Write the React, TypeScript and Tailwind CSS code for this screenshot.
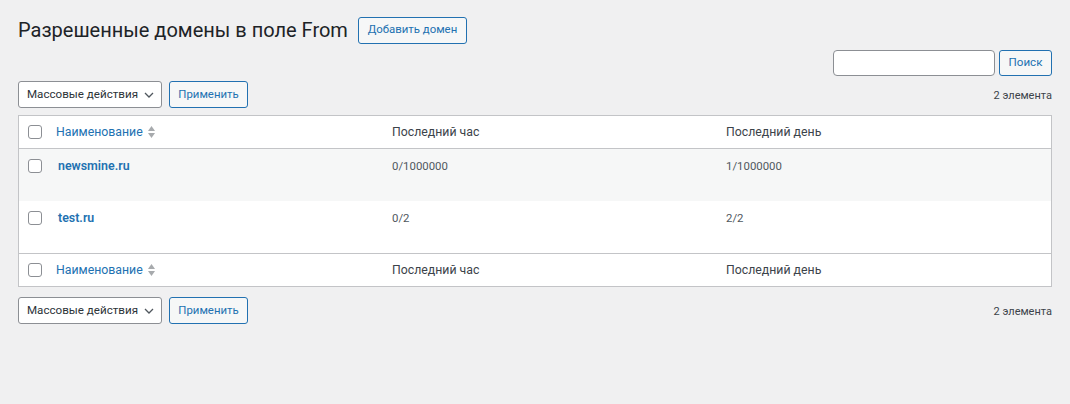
import React from "react";

const font = { fontFamily: 'Roboto, "Liberation Sans", sans-serif' };

function Checkbox() {
  return <span className="block w-[14px] h-[14px] rounded-[3px] border border-[#8c8f94] bg-white" />;
}

function SortArrows() {
  return (
    <svg width="9" height="14" viewBox="0 0 9 14" className="ml-[4px]">
      <path d="M4.5 1 L8 6 L1 6 Z" fill="#a7aaad" />
      <path d="M1 8 L8 8 L4.5 13 Z" fill="#a7aaad" />
    </svg>
  );
}

function BulkActions() {
  return (
    <div className="flex items-center gap-[7px]">
      <div className="flex items-center justify-between w-[144px] h-[27px] pl-[8px] pr-[7px] bg-white border border-[#8c8f94] rounded-[3px] text-[11.6px] text-[#2c3338] whitespace-nowrap">
        <span>Массовые действия</span>
        <svg width="10" height="6" viewBox="0 0 10 6">
          <path d="M1 1 L5 5 L9 1" fill="none" stroke="#50575e" strokeWidth="1.3" />
        </svg>
      </div>
      <button className="h-[27px] w-[79px] bg-[#f6f7f7] border border-[#2271b1] rounded-[3px] text-[11.4px] text-[#2271b1]">
        Применить
      </button>
    </div>
  );
}

function HeadRow({ top }: { top: boolean }) {
  return (
    <div
      className={`grid grid-cols-[27px_336px_334px_1fr] h-[33px] items-center text-[12.3px] text-[#3c434a] ${
        top ? "border-b" : "border-t"
      } border-[#c3c4c7]`}
    >
      <div className="pl-[9px]">
        <Checkbox />
      </div>
      <div className="pl-[10px] flex items-center text-[#2271b1]">
        Наименование
        <SortArrows />
      </div>
      <div className="pl-[10px]">Последний час</div>
      <div className="pl-[10px]">Последний день</div>
    </div>
  );
}

const rows = [
  { name: "newsmine.ru", hour: "0/1000000", day: "1/1000000" },
  { name: "test.ru", hour: "0/2", day: "2/2" },
];

export default function App() {
  return (
    <div className="w-full min-h-screen bg-[#f0f0f1] px-[18px] pt-[15px]" style={font}>
      <div className="flex items-center">
        <h1 className="text-[20px] leading-[30px] text-[#1d2327]">Разрешенные домены в поле From</h1>
        <button className="ml-[10px] h-[27px] w-[109px] bg-[#f6f7f7] border border-[#2271b1] rounded-[3px] text-[11.4px] text-[#2271b1]">
          Добавить домен
        </button>
      </div>

      <div className="flex justify-end gap-[4px] mt-[5px]">
        <input className="w-[162px] h-[26px] bg-white border border-[#8c8f94] rounded-[4px]" />
        <button className="w-[53px] h-[26px] bg-[#f6f7f7] border border-[#2271b1] rounded-[3px] text-[11.6px] text-[#2271b1]">
          Поиск
        </button>
      </div>

      <div className="flex items-center justify-between mt-[5px]">
        <BulkActions />
        <span className="text-[11px] text-[#3c434a] pt-[3px]">2 элемента</span>
      </div>

      <div className="mt-[7px] bg-white border border-[#c3c4c7]">
        <HeadRow top />
        {rows.map((r, i) => (
          <div
            key={r.name}
            className={`grid grid-cols-[27px_336px_334px_1fr] h-[52px] pt-[10px] text-[11.4px] text-[#50575e] ${
              i % 2 === 0 ? "bg-[#f6f7f7]" : "bg-white"
            }`}
          >
            <div className="pl-[9px]">
              <Checkbox />
            </div>
            <div className="pl-[12px] text-[12.4px] font-semibold text-[#2271b1] leading-[14px]">{r.name}</div>
            <div className="pl-[10px] leading-[14px]">{r.hour}</div>
            <div className="pl-[10px] leading-[14px]">{r.day}</div>
          </div>
        ))}
        <HeadRow top={false} />
      </div>

      <div className="flex items-center justify-between mt-[10px]">
        <BulkActions />
        <span className="text-[11px] text-[#3c434a] pt-[3px]">2 элемента</span>
      </div>
    </div>
  );
}
